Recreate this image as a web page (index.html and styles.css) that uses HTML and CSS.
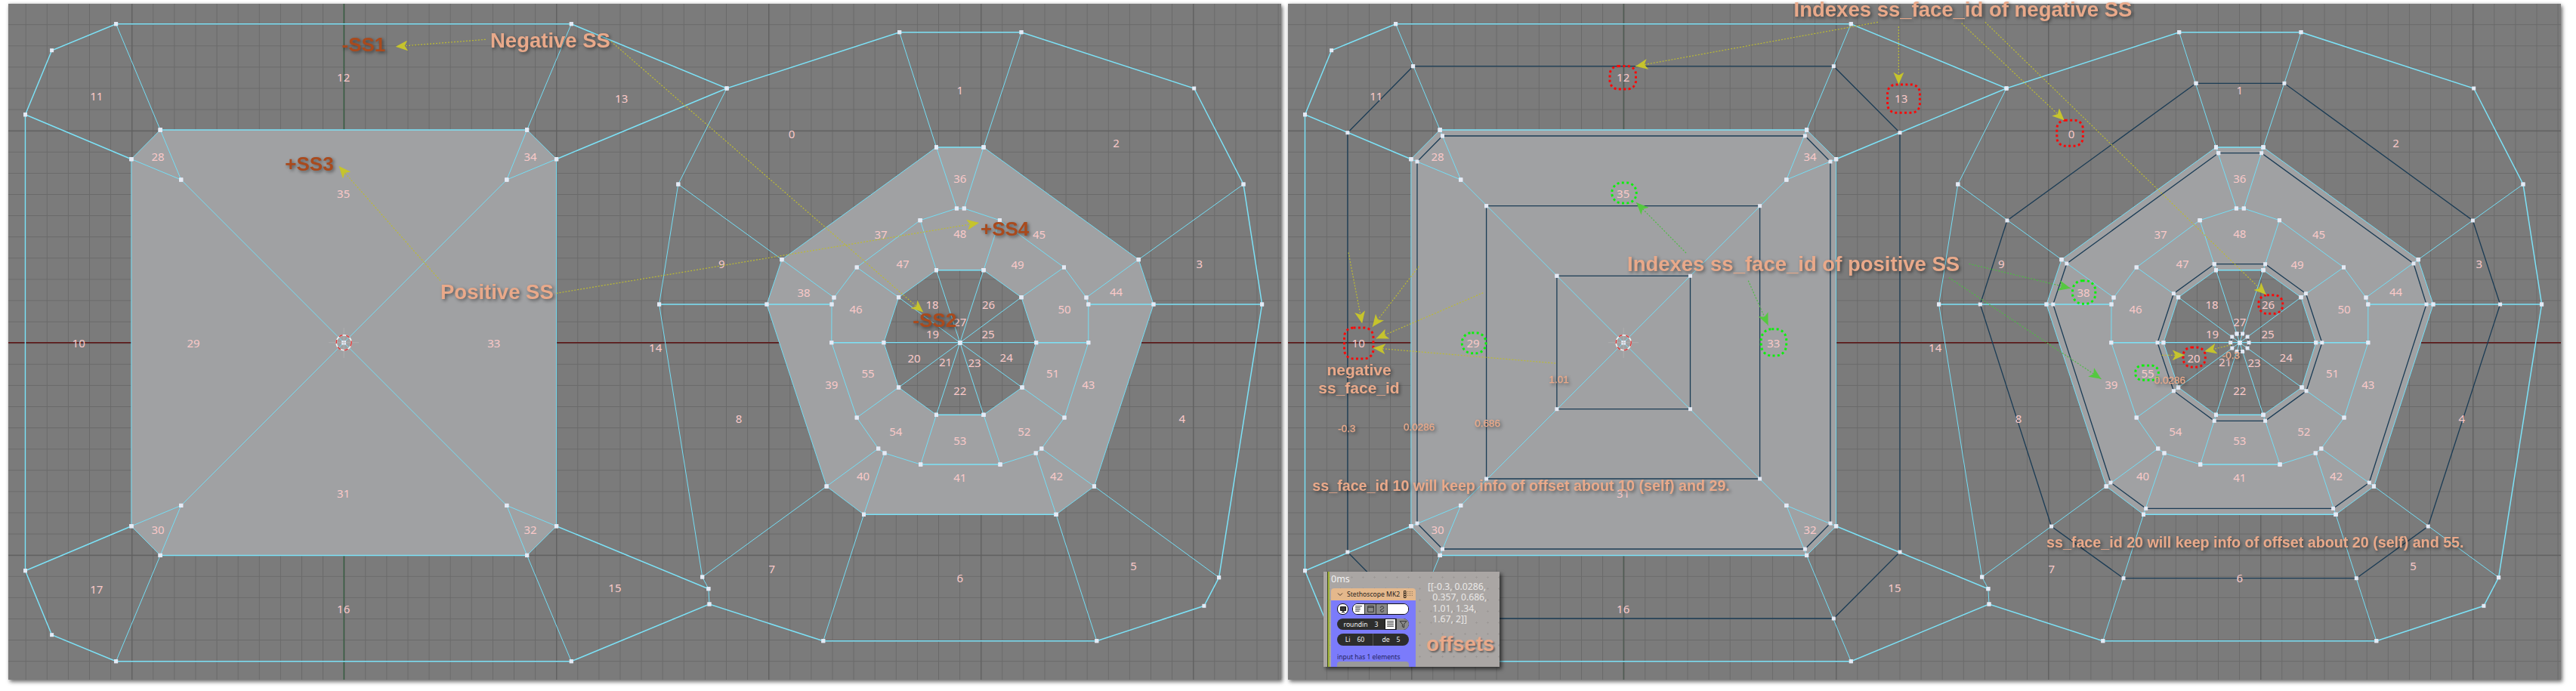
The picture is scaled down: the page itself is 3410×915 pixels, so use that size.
FILE: index.html
```html
<!DOCTYPE html>
<html lang="en">
<head>
<meta charset="utf-8">
<title>ss_face_id offsets</title>
<link rel="stylesheet" href="styles.css">
</head>
<body>
<main class="sheet">
<section class="panel">
<svg class="view" viewBox="11 5 1685 895" xmlns="http://www.w3.org/2000/svg">
  <defs>
    <pattern id="grid" patternUnits="userSpaceOnUse" x="455.2" y="453.7" width="28.1" height="28.1">
      <path class="gridline" d="M0 0H28.1M0 0V28.1"/>
    </pattern>
    <pattern id="gridmajor" patternUnits="userSpaceOnUse" x="174.2" y="172.7" width="281" height="281">
      <path class="gridmajor" d="M0 0H281M0 0V281"/>
    </pattern>
    <marker id="v" markerUnits="userSpaceOnUse" markerWidth="6" markerHeight="6" refX="3" refY="3">
      <rect x="0.5" y="0.5" width="5" height="5" fill="#e4eaf5"/>
    </marker>
    <marker id="ay" markerUnits="userSpaceOnUse" markerWidth="17" markerHeight="14" refX="16" refY="7" orient="auto">
      <path d="M16 7L0 0L4 7L0 14Z" fill="#c6c42c"/>
    </marker>
    <marker id="ag" markerUnits="userSpaceOnUse" markerWidth="17" markerHeight="14" refX="16" refY="7" orient="auto">
      <path d="M16 7L0 0L4 7L0 14Z" fill="#55c840"/>
    </marker>
    <g id="mesh">
      <path class="fill" d="M212.2 172L697.6 172L736.6 210.7L736.6 696.7L697.6 735.4L212.2 735.4L173.9 696.7L173.9 210.7Z"/>
      <path class="fill" fill-rule="evenodd" d="M1239.5 195L1302 195L1507.2 343.7L1527 403L1448.5 644L1398 681.3L1143.5 681.3L1094.2 644L1015 403L1035 343.7ZM1239.5 357.7L1302 357.7L1352 393.7L1371.7 453.7L1353 513L1302 549.3L1239.5 549.3L1189.6 513L1169.9 453.7L1189.6 393.7Z"/>
      <g marker-start="url(#v)" marker-mid="url(#v)" marker-end="url(#v)">
        <path class="thin" d="M153.6 31.7L212.2 172M756.3 31.7L697.6 172M212.2 172L239.7 238M173.9 210.7L239.7 238M697.6 172L670.8 238M736.6 210.7L670.8 238M212.2 172L173.9 210.7M697.6 172L736.6 210.7M173.9 210.7L173.9 696.7M736.6 210.7L736.6 696.7M239.7 238L455.2 453.7M670.8 238L455.2 453.7M239.7 669.4L455.2 453.7M670.8 669.4L455.2 453.7M212.2 735.4L239.7 669.4M173.9 696.7L239.7 669.4M697.6 735.4L670.8 669.4M736.6 696.7L670.8 669.4M212.2 735.4L173.9 696.7M697.6 735.4L736.6 696.7M212.2 735.4L153.6 875.7M697.6 735.4L756.3 875.7"/>
        <path class="thin" d="M962 117L897.8 244L872.6 403L929.7 764L937.9 779.7L939 800M897.8 244L1035 343.7M1646 244L1507.2 343.7M1190.7 42.7L1239.5 195M1352 42.7L1302 195M1089.8 848.7L1143.5 681.3M1451.8 848.7L1398 681.3M929.7 764L1094.2 644M1613.6 764.7L1448.5 644M1302 195L1507.2 343.7L1527 403L1448.5 644L1398 681.3M1239.5 195L1035 343.7L1015 403L1094.2 644L1143.5 681.3"/>
        <path class="thin" d="M1239.5 195L1266.4 276M1302 195L1276.3 276M1218.1 291.7L1266.4 276L1276.3 276L1323.4 291.7L1408.5 354L1438 394L1440.8 403L1440.8 453.7L1409 553L1378.8 594L1371.2 600L1324 615M1218.1 291.7L1134.2 354L1104 394L1101 403L1100.8 453.7L1134.2 553L1162.7 594L1171 600L1218.7 615M1218.1 291.7L1239.5 357.7M1323.4 291.7L1302 357.7M1134.2 354L1189.6 393.7M1408.5 354L1352 393.7M1035 343.7L1104 394M1507.2 343.7L1438 394M1189.6 513L1134.2 553M1353 513L1409 553M1162.7 594L1094.2 644M1378.8 594L1448.5 644M1171 600L1143.5 681.3M1371.2 600L1398 681.3M1239.5 549.3L1218.7 615M1302 549.3L1324 615"/>
        <path class="thin" d="M1239.5 357.7L1189.6 393.7L1169.9 453.7L1189.6 513L1239.5 549.3M1302 357.7L1352 393.7L1371.7 453.7L1353 513L1302 549.3M1239.5 357.7L1270.8 453.7M1302 357.7L1270.8 453.7M1352 393.7L1270.8 453.7M1353 513L1270.8 453.7M1302 549.3L1270.8 453.7M1239.5 549.3L1270.8 453.7M1189.6 513L1270.8 453.7M1189.6 393.7L1270.8 453.7"/>
        <path class="thick" d="M33.5 151.7L68.6 66.7L153.6 31.7L756.3 31.7L962 117L1190.7 42.7L1352 42.7L1580.7 117L1646 244L1670.6 403L1613.6 764.7L1593.9 802.3L1451.8 848.7L1089.8 848.7L939 800L756.3 875.7L153.6 875.7L68.6 840.7L33.5 755.7L33.5 151.7"/>
        <path class="thick" d="M33.5 151.7L173.9 210.7M736.6 210.7L962 117M33.5 755.7L173.9 696.7M736.6 696.7L937.9 779.7M212.2 172L697.6 172M212.2 735.4L697.6 735.4M1239.5 195L1302 195M1143.5 681.3L1398 681.3M1218.7 615L1324 615M1239.5 357.7L1302 357.7M1239.5 549.3L1302 549.3M872.6 403L1015 403L1101 403M1440.8 403L1527 403L1670.6 403M1100.8 453.7L1169.9 453.7L1270.8 453.7L1371.7 453.7L1440.8 453.7"/>
      </g>
    </g>
  </defs>
  <rect class="bg" x="11" y="5" width="1685" height="895"/>
  <rect x="11" y="5" width="1685" height="895" fill="url(#grid)"/>
  <rect x="11" y="5" width="1685" height="895" fill="url(#gridmajor)"/>
  <path class="axis-x" d="M11 453.7H1696"/>
  <path class="axis-y" d="M455.2 5V900"/>
  <use href="#mesh"/>
  <g class="cursor">
    <path class="cross" d="M435 453.7H475M455.2 434V474"/>
    <circle class="ring-w" cx="455.2" cy="453.7" r="10"/>
    <circle class="ring-r" cx="455.2" cy="453.7" r="10"/>
  </g>
  <g class="lab">
    <text x="127.8" y="127.3">11</text><text x="454.7" y="102">12</text><text x="822.7" y="130.3">13</text><text x="209" y="207.3">28</text><text x="702" y="207.3">34</text><text x="454.7" y="255.7">35</text><text x="104.2" y="454">10</text><text x="256.1" y="454">29</text><text x="653.8" y="454">33</text><text x="454.7" y="653.3">31</text><text x="209" y="701.3">30</text><text x="702" y="701.3">32</text><text x="127.8" y="780">17</text><text x="454.7" y="806.3">16</text><text x="813.9" y="778.3">15</text>
    <text x="1270.8" y="119.3">1</text><text x="1048" y="177.3">0</text><text x="1477.6" y="189.3">2</text><text x="1270.8" y="236.3">36</text><text x="1166" y="310.3">37</text><text x="1270.8" y="309.3">48</text><text x="1375.5" y="310.3">45</text><text x="1195" y="349.3">47</text><text x="1347" y="350.3">49</text><text x="955.4" y="349.3">9</text><text x="1587.8" y="349.3">3</text><text x="1064" y="387.3">38</text><text x="1477.6" y="386.3">44</text><text x="1133" y="409.3">46</text><text x="1409" y="409.3">50</text><text x="1234" y="402.7">18</text><text x="1308.6" y="402.7">26</text><text x="1270.8" y="426.3">27</text><text x="1234.6" y="442.3">19</text><text x="1308" y="442.3">25</text><text x="867.7" y="459.7">14</text>
    <text x="1210" y="474.3">20</text><text x="1251.6" y="479.3">21</text><text x="1290" y="480.3">23</text><text x="1332.2" y="473.3">24</text><text x="1270.8" y="517.3">22</text><text x="1149" y="494.3">55</text><text x="1393.6" y="494.3">51</text><text x="1100.8" y="509.3">39</text><text x="1440.8" y="509.3">43</text><text x="978" y="554.3">8</text><text x="1564.8" y="554.3">4</text><text x="1185.8" y="571.3">54</text><text x="1355.8" y="571.3">52</text><text x="1270.8" y="583.3">53</text><text x="1142.5" y="630.3">40</text><text x="1270.8" y="632.3">41</text><text x="1398.6" y="630.3">42</text><text x="1021.8" y="753">7</text><text x="1270.8" y="765.3">6</text><text x="1500.6" y="749.3">5</text>
  </g>
  <g class="yl" marker-end="url(#ay)">
    <path d="M642.8 52.3L523.8 61.7"/>
    <path d="M809 55L1222 413.3"/>
    <path d="M583 371.7L448.6 220"/>
    <path d="M736.6 388.3L1296 295"/>
  </g>
  <g class="shadowed">
    <text class="note" x="649" y="63.3">Negative SS</text>
    <text class="note" x="583" y="395.7">Positive SS</text>
    <text class="ss" x="452.5" y="68">-SS1</text>
    <text class="ss" x="377.3" y="226">+SS3</text>
    <text class="ss" x="1298" y="311.7">+SS4</text>
    <text class="ss" x="1208.3" y="432.7">-SS2</text>
  </g>
</svg>
</section>

<section class="panel">
<svg class="view" viewBox="11 5 1685 895" xmlns="http://www.w3.org/2000/svg">
  <rect class="bg" x="11" y="5" width="1685" height="895"/>
  <rect x="11" y="5" width="1685" height="895" fill="url(#grid)"/>
  <rect x="11" y="5" width="1685" height="895" fill="url(#gridmajor)"/>
  <path class="axis-x" d="M11 453.7H1696"/>
  <path class="axis-y2" d="M455.2 5V900"/>
  <use href="#mesh"/>
  <g class="dark" marker-start="url(#v)" marker-mid="url(#v)" marker-end="url(#v)">
    <path d="M176.6 87.7L733.3 87.7L821 175.7L821 731L733.3 819L176.6 819L89.9 731L89.9 175.7L176.6 87.7"/>
    <path d="M215.5 180L695.4 180L728.9 214L728.9 693L695.4 727L215.5 727L182 693L182 214L215.5 180"/>
    <path d="M273.6 272.7L635.6 272.7L635.6 634L273.6 634L273.6 272.7"/>
    <path d="M366.9 365.3L543.5 365.3L543.5 541.7L366.9 541.7L366.9 365.3"/>
    <path d="M1213 110.3L1329.9 110.3L1579.4 292L1615.6 403L1520.2 697L1425.3 765.7L1117 765.7L1021.6 697L927.3 403L963 292L1213 110.3"/>
    <path d="M1242.7 202.7L1299.7 202.7L1501 349L1518 403L1442.3 639L1394.6 673.3L1146.7 673.3L1100 639L1023.8 403L1041.9 349L1242.7 202.7"/>
    <path d="M1237.2 349.7L1304.6 349.7L1358.4 388.7L1379.8 453.7L1359 517.7L1304.6 557.3L1237.2 557.3L1183.4 517.7L1162 453.7L1183.4 388.7L1237.2 349.7"/>
    <path class="tiny" d="M1267 442L1274.6 442L1281 446L1283 453.7L1281 461L1274.6 465.5L1267 465.5L1260.8 461L1258.7 453.7L1260.8 446L1267 442"/>
  </g>
  <g class="cursor">
    <path class="cross" d="M435 453.7H475M455.2 434V474"/>
    <circle class="ring-w" cx="455.2" cy="453.7" r="10"/>
    <circle class="ring-r" cx="455.2" cy="453.7" r="10"/>
  </g>
  <g class="lab">
    <text x="127.8" y="127.3">11</text><text x="454.7" y="102">12</text><text x="822.7" y="130.3">13</text><text x="209" y="207.3">28</text><text x="702" y="207.3">34</text><text x="454.7" y="255.7">35</text><text x="104.2" y="454">10</text><text x="256.1" y="454">29</text><text x="653.8" y="454">33</text><text x="454.7" y="653.3">31</text><text x="209" y="701.3">30</text><text x="702" y="701.3">32</text><text x="813.9" y="778.3">15</text><text x="454.7" y="806.3">16</text>
    <text x="1270.8" y="119.3">1</text><text x="1048" y="177.3">0</text><text x="1477.6" y="189.3">2</text><text x="1270.8" y="236.3">36</text><text x="1166" y="310.3">37</text><text x="1270.8" y="309.3">48</text><text x="1375.5" y="310.3">45</text><text x="1195" y="349.3">47</text><text x="1347" y="350.3">49</text><text x="955.4" y="349.3">9</text><text x="1587.8" y="349.3">3</text><text x="1064" y="387.3">38</text><text x="1477.6" y="386.3">44</text><text x="1133" y="409.3">46</text><text x="1409" y="409.3">50</text><text x="1234" y="402.7">18</text><text x="1308.6" y="402.7">26</text><text x="1270.8" y="426.3">27</text><text x="1234.6" y="442.3">19</text><text x="1308" y="442.3">25</text><text x="867.7" y="459.7">14</text>
    <text x="1210" y="474.3">20</text><text x="1251.6" y="479.3">21</text><text x="1290" y="480.3">23</text><text x="1332.2" y="473.3">24</text><text x="1270.8" y="517.3">22</text><text x="1149" y="494.3">55</text><text x="1393.6" y="494.3">51</text><text x="1100.8" y="509.3">39</text><text x="1440.8" y="509.3">43</text><text x="978" y="554.3">8</text><text x="1564.8" y="554.3">4</text><text x="1185.8" y="571.3">54</text><text x="1355.8" y="571.3">52</text><text x="1270.8" y="583.3">53</text><text x="1142.5" y="630.3">40</text><text x="1270.8" y="632.3">41</text><text x="1398.6" y="630.3">42</text><text x="1021.8" y="753">7</text><text x="1270.8" y="765.3">6</text><text x="1500.6" y="749.3">5</text>
  </g>
  <g class="red">
    <rect x="437" y="87.5" width="34.5" height="30.5" rx="11"/>
    <rect x="804.6" y="112" width="42.8" height="37.3" rx="11"/>
    <rect x="85.5" y="434" width="38.4" height="41" rx="12"/>
    <rect x="1028.8" y="159.3" width="34.5" height="34" rx="11"/>
    <rect x="1295.9" y="390.7" width="31.8" height="24.6" rx="11"/>
    <rect x="1196" y="460" width="29.3" height="26" rx="11"/>
  </g>
  <g class="green">
    <rect x="439.8" y="242" width="32.4" height="27" rx="13"/>
    <rect x="241.3" y="440.7" width="31.7" height="27" rx="13"/>
    <rect x="637.3" y="435.7" width="33.4" height="35.3" rx="14"/>
    <rect x="1049.6" y="371.7" width="30.2" height="30.6" rx="13"/>
    <rect x="1132.7" y="484" width="30.6" height="19.3" rx="9"/>
  </g>
  <g class="yl" marker-end="url(#ay)">
    <path d="M791.9 29.3L471.1 87.7"/>
    <path d="M819.4 35L819.4 111.7"/>
    <path d="M902.6 30.7L1038.6 159.3"/>
    <path d="M933.9 29.3L1305.7 390"/>
    <path d="M91 334.3L109.1 428.3"/>
    <path d="M184.2 352.7L122.8 432.7"/>
    <path d="M269.3 387.7L127.8 448.3"/>
    <path d="M365.2 481L123.9 460.7"/>
    <path d="M1167.7 470.3L1197.7 470.3"/>
    <path d="M1259.3 456.7L1224.3 465.3"/>
  </g>
  <g class="gr" marker-end="url(#ag)">
    <path d="M538 335L472.2 268.3"/>
    <path d="M620.3 371.7L646.6 430.7"/>
    <path d="M912.5 349.3L1046.9 381.7"/>
    <path d="M886 367.7L1087.4 501.7"/>
  </g>
  <g class="shadowed">
    <text class="note" x="680.6" y="22">Indexes ss_face_id of negative SS</text>
    <text class="note" x="460" y="359.3">Indexes ss_face_id of positive SS</text>
    <text class="note-m mid" x="105" y="496.7">negative</text>
    <text class="note-m mid" x="105" y="520.7">ss_face_id</text>
    <text class="note-s" x="43.3" y="650">ss_face_id 10 will keep info of offset about 10 (self) and 29.</text>
    <text class="note-s" x="1015" y="725">ss_face_id 20 will keep info of offset about 20 (self) and 55.</text>
    <text class="val" x="77.3" y="571.7">-0.3</text>
    <text class="val" x="164" y="570">0.0286</text>
    <text class="val" x="258.3" y="565">0.686</text>
    <text class="val" x="356.5" y="507">1.01</text>
    <text class="val" x="1157.7" y="508.3">0.0286</text>
    <text class="val" x="1247.7" y="474.7">-0.3</text>
  </g>
</svg>
<div class="frame">
  <div class="strip"></div>
  <div class="frame-main">
    <div class="time">0ms</div>
    <div class="node">
      <div class="node-head">
        <svg class="chev" viewBox="0 0 8 6"><path d="M1 1.5L4 4.5L7 1.5"/></svg>
        <span class="node-title">Stethoscope MK2</span>
        <svg class="socket-ico" viewBox="0 0 13 10"><path d="M0.5 0.5H3V9.5H0.5ZM0.5 3.5H3M0.5 6.5H3"/><path class="dim" d="M5 1.5H13M5 4H13M5 6.5H13"/></svg>
      </div>
      <div class="node-body">
        <div class="row">
          <span class="btn-round"><svg viewBox="0 0 10 10"><path d="M1.5 1.5H8.5V6.5H1.5ZM3 8.5H7M5 6.5V8.5"/></svg></span>
          <div class="seg">
            <span class="cell cell-w"><svg viewBox="0 0 10 10"><path d="M1 1.5H9M1 3.5H7M1 5.5H7M1 7.5H6"/></svg></span>
            <span class="cell cell-g"><svg viewBox="0 0 10 10"><path d="M1.5 1.5H8.5V8.5H1.5ZM1.5 3H8.5"/></svg></span>
            <span class="cell cell-g"><svg viewBox="0 0 10 10"><path d="M3 3.5C3 1 7 1 7 3.5C7 5 3 5 3 6.5C3 9 7 9 7 6.5"/></svg></span>
            <span class="cell-blank"></span>
          </div>
        </div>
        <div class="row pill">
          <span class="pill-text"><span>roundin</span><span>3</span></span>
          <span class="cell cell-w cell-b"><svg viewBox="0 0 10 10"><path d="M1 1.5H9M1 3.5H9M1 5.5H9M1 7.5H9"/></svg></span>
          <span class="cell cell-g cell-e"><svg viewBox="0 0 10 10"><path d="M1 1.5H9L6 5V9L4 8V5Z"/></svg></span>
        </div>
        <div class="row pill pill-tall">
          <span class="pill-text pill-half"><span>Li</span><span>60</span></span>
          <span class="pill-text pill-half pill-div"><span>de</span><span>5</span></span>
        </div>
        <div class="info">input has 1 elements</div>
        <div class="stub"></div>
      </div>
    </div>
  </div>
  <div class="frame-side">
    <pre class="out">[[-0.3, 0.0286,
  0.357, 0.686,
  1.01, 1.34,
  1.67, 2]]</pre>
    <div class="offsets">offsets</div>
  </div>
</div>
</section>
</main>
</body>
</html>
```
FILE: styles.css
```css
html, body { margin: 0; padding: 0; background: #fff; }
body { width: 3410px; height: 915px; overflow: hidden; font-family: "Noto Sans", sans-serif; }
.sheet { display: flex; gap: 9px; padding: 5px 0 0 11px; }
.panel { position: relative; flex: none; width: 1685px; height: 895px; background: #7b7b7b; box-shadow: 2px 3px 5px rgba(0,0,0,.55), 0 -1px 3px rgba(0,0,0,.12); }
.view { display: block; width: 1685px; height: 895px; overflow: visible; }
.bg { fill: #7b7b7b; }
.gridline { fill: none; stroke: #6a6a6a; stroke-width: 2; }
.gridmajor { fill: none; stroke: #5f5f5f; stroke-width: 2.4; }
.axis-x { stroke: #5c1414; stroke-width: 1.6; fill: none; }
.axis-y { stroke: #2f5c3c; stroke-width: 1.2; fill: none; }
.axis-y2 { stroke: #4c5a50; stroke-width: 1.2; fill: none; }
.fill { fill: #a0a1a3; stroke: none; }
.thin { fill: none; stroke: #74def5; stroke-width: 1; }
.thick { fill: none; stroke: #7ce2f7; stroke-width: 1.5; }
.dark path { fill: none; stroke: #1b3c55; stroke-width: 1.3; }
.dark path.tiny { stroke-width: 1; }
.cross { stroke: #b4b4b4; stroke-width: 1; fill: none; opacity: .7; }
.ring-w { fill: none; stroke: #f2f2f2; stroke-width: 1.5; }
.ring-r { fill: none; stroke: #d83a3a; stroke-width: 1.5; stroke-dasharray: 5 5; }
.lab text { font: 400 15px "Noto Sans", sans-serif; fill: #f9c9c9; text-anchor: middle; dominant-baseline: central; }
.red rect { fill: none; stroke: #f80a0a; stroke-width: 3; stroke-dasharray: 3 3.4; }
.green rect { fill: none; stroke: #0cf00c; stroke-width: 3; stroke-dasharray: 3 3.4; }
.yl path { fill: none; stroke: #bcbb33; stroke-width: 1.2; stroke-dasharray: 2 2; }
.gr path { fill: none; stroke: #4fbb45; stroke-width: 1.2; stroke-dasharray: 2 2; }
.shadowed { filter: drop-shadow(2px 2px 2px rgba(0,0,0,.45)); }
.note, .note-m, .note-s, .ss, .val { font-family: "Liberation Sans", Arial, sans-serif; }
.note { font-size: 27.5px; font-weight: 700; fill: #e9a98a; }
.note-m { font-size: 21px; font-weight: 700; fill: #e9a98a; }
.mid { text-anchor: middle; }
.note-s { font-size: 19.7px; font-weight: 700; fill: #e9a98a; }
.ss { font-size: 26px; font-weight: 700; fill: #a94a1d; }
.val { font-size: 13.5px; font-weight: 400; fill: #e9a98a; stroke: #e9a98a; stroke-width: .3; }

.frame { position: absolute; left: 47px; top: 752px; width: 233px; height: 126px; display: flex; background-color: #aaa6a4; background-image: radial-gradient(circle, #9d9997 1px, transparent 1.2px); background-size: 15px 15px; box-shadow: 3px 3px 5px rgba(0,0,0,.6); }
.strip { flex: none; width: 3px; height: 126px; margin-left: 5px; background: linear-gradient(to right, #3c4a1c 0 1px, #a3b53a 1px 3px); }
.frame-main { flex: none; width: 114px; padding-left: 2px; height: 126px; overflow: hidden; }
.time { height: 22px; line-height: 20px; font-size: 12.5px; color: #f2f2f2; }
.node { width: 112px; height: 104px; border-radius: 4px 4px 0 0; overflow: hidden; }
.node-head { height: 16px; background: #e4b88c; display: flex; align-items: center; padding: 0 5px 0 8px; gap: 5px; }
.chev { width: 8px; height: 6px; flex: none; }
.chev path { fill: none; stroke: #4a3a2a; stroke-width: 1; }
.node-title { font-size: 8.6px; color: #26221e; flex: 1; white-space: nowrap; }
.socket-ico { width: 13px; height: 10px; flex: none; }
.socket-ico path { fill: none; stroke: #33291f; stroke-width: 1; }
.socket-ico path.dim { stroke: #8f7a60; stroke-dasharray: 1 1; }
.node-body { height: 88px; background: #7b7bfb; padding: 4px 9px 0 8px; display: flex; flex-direction: column; gap: 5px; }
.row { display: flex; align-items: stretch; height: 15px; flex: none; }
.btn-round { flex: none; width: 15px; height: 15px; border-radius: 7px; background: #fff; border: 1px solid #111; box-sizing: border-box; display: flex; align-items: center; justify-content: center; margin-right: 5px; }
.btn-round svg { width: 10px; height: 10px; }
.btn-round path { fill: #3a3a3a; stroke: #111; stroke-width: 1; }
.seg { flex: 1; display: flex; border: 1px solid #111; border-radius: 7px; background: #fff; overflow: hidden; }
.cell { flex: none; width: 15px; display: flex; align-items: center; justify-content: center; }
.cell svg { width: 11px; height: 11px; }
.cell path { fill: none; stroke: #333; stroke-width: .9; }
.cell-w { background: #fff; }
.cell-g { background: #8a8a8a; border-left: 1px solid #333; box-sizing: border-box; }
.cell-blank { flex: 1; border-left: 1px solid #333; background: #fff; }
.pill { border-radius: 8px; background: #2d2d2d; overflow: hidden; color: #f0f0f0; font-size: 8.6px; }
.pill-tall { height: 16px; }
.pill-text { flex: 1; display: flex; align-items: center; justify-content: center; gap: 9px; white-space: nowrap; }
.pill-half { flex: 1 1 50%; }
.pill-div { border-left: 1px solid #555; }
.cell-b { border: 1px solid #111; box-sizing: border-box; }
.cell-e { width: 17px; border-top-right-radius: 8px; border-bottom-right-radius: 8px; }
.info { font-size: 8.5px; color: #23235c; height: 13px; line-height: 13px; margin-top: 3px; white-space: nowrap; }
.stub { height: 8px; background: #9a9a9a; border-radius: 4px 4px 0 0; margin-top: -5px; }
.frame-side { flex: none; width: 100px; padding: 13px 0 0 14px; box-sizing: border-box; }
.out { margin: 0; font: 400 12.2px/14.4px "Noto Sans", sans-serif; color: #ebe9e7; height: 68px; }
.offsets { font: 700 27.5px/30px "Liberation Sans", Arial, sans-serif; color: #e9a98a; text-shadow: 2px 2px 2px rgba(0,0,0,.4); margin: 0 0 0 -2px; }
```
